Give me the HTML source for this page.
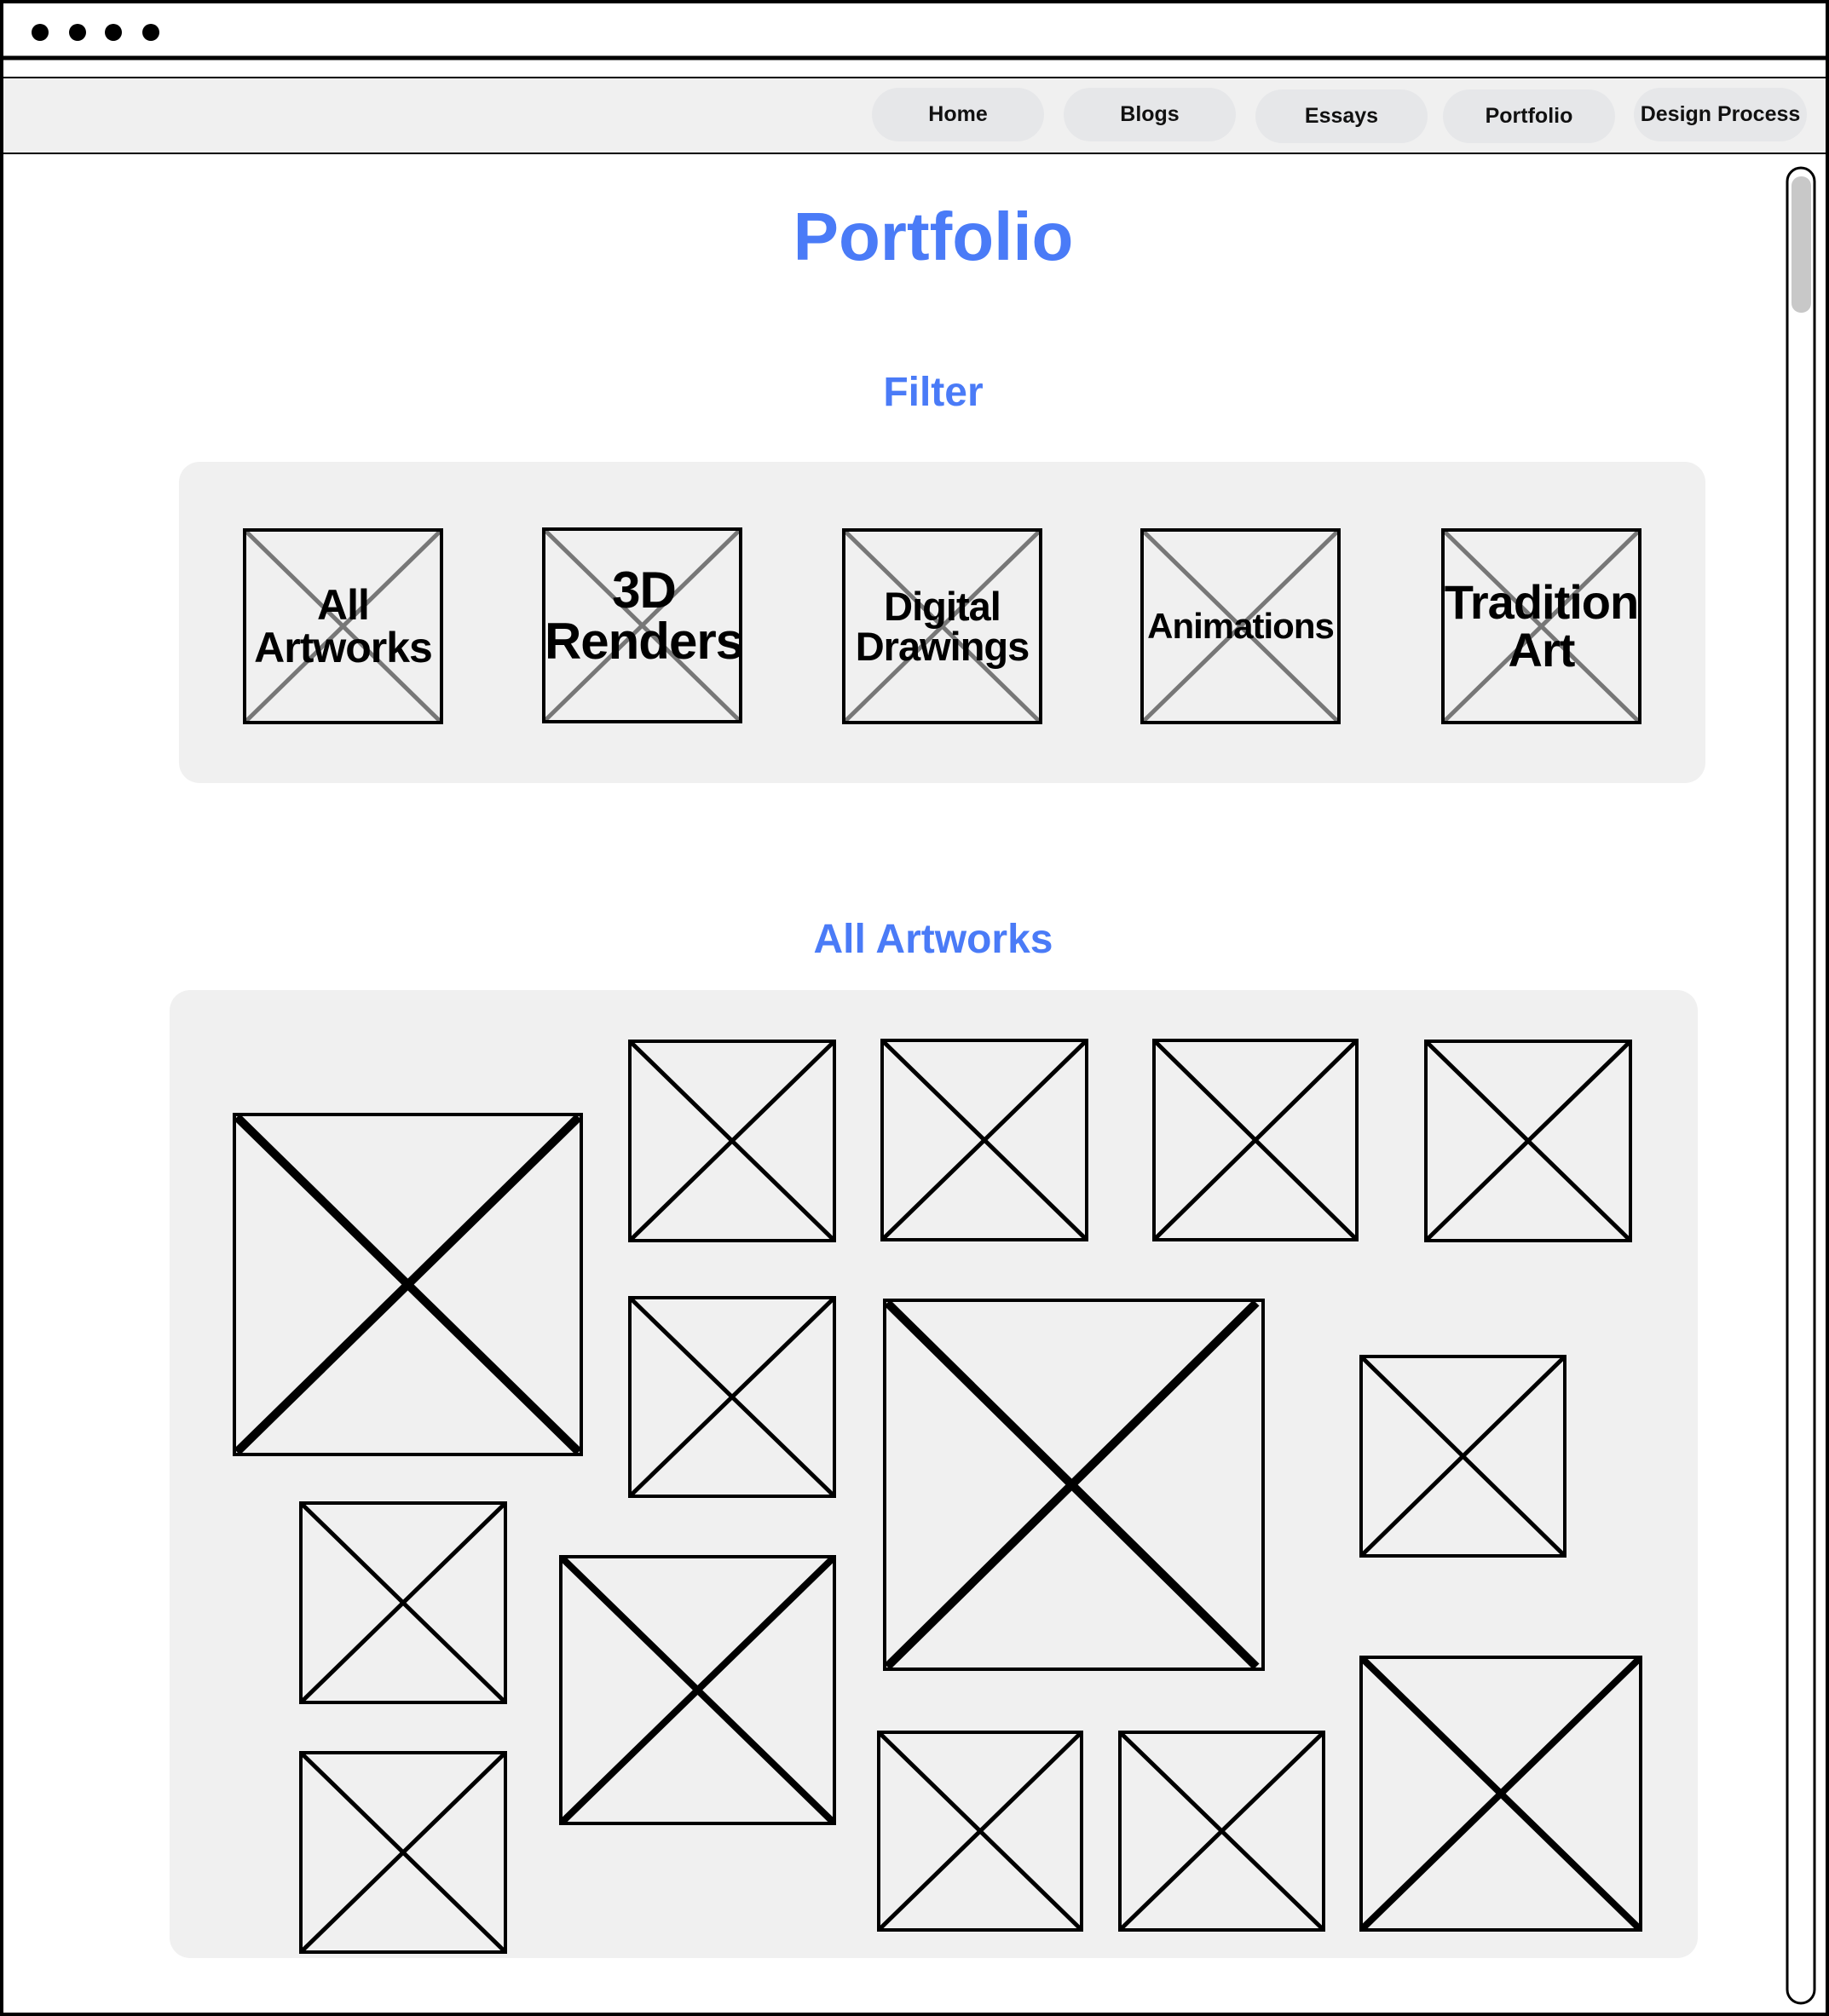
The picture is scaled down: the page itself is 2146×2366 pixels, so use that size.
<!DOCTYPE html>
<html><head><meta charset="utf-8"><style>
*{margin:0;padding:0;box-sizing:border-box}
body{width:2146px;height:2366px;background:#fff;position:relative;overflow:hidden;font-family:"Liberation Sans",sans-serif}
.abs{position:absolute}
.btn{position:absolute;top:103px;height:63px;width:202px;border-radius:32px;background:#e6e7e9;font-size:25px;font-weight:bold;color:#111;display:flex;align-items:center;justify-content:center}
.h{position:absolute;left:0;width:2190px;text-align:center;color:#4a7bf7;font-weight:bold}
.fl{position:absolute;width:231px;height:226px;display:flex;align-items:center;justify-content:center;text-align:center;font-weight:bold;color:#000;line-height:1;letter-spacing:-1px}
</style></head><body>
<svg class="abs" style="left:0;top:0" width="2146" height="2366">
<rect x="2" y="2" width="2142" height="2362" fill="none" stroke="#000" stroke-width="4"/>
<line x1="0" y1="68" x2="2146" y2="68" stroke="#000" stroke-width="5"/>
<rect x="4" y="91" width="2138" height="89" fill="#f0f0f0"/>
<line x1="0" y1="91" x2="2146" y2="91" stroke="#000" stroke-width="2"/>
<line x1="0" y1="180" x2="2146" y2="180" stroke="#000" stroke-width="2"/>
<circle cx="47" cy="38" r="10"/><circle cx="91" cy="38" r="10"/><circle cx="133" cy="38" r="10"/><circle cx="177" cy="38" r="10"/>
<rect x="2097" y="197" width="32" height="2154" rx="16" fill="#fff" stroke="#000" stroke-width="3"/>
<rect x="2102" y="207" width="23" height="160" rx="11" fill="#c8c8c8"/>
<rect x="210" y="542" width="1791" height="377" rx="24" fill="#f0f0f0"/>
<rect x="199" y="1162" width="1793" height="1136" rx="24" fill="#f0f0f0"/>
<g stroke="#777" stroke-width="5">
<line x1="287" y1="622" x2="518" y2="848"/><line x1="518" y1="622" x2="287" y2="848"/>
<line x1="638" y1="621" x2="869" y2="847"/><line x1="869" y1="621" x2="638" y2="847"/>
<line x1="990" y1="622" x2="1221" y2="848"/><line x1="1221" y1="622" x2="990" y2="848"/>
<line x1="1340" y1="622" x2="1571" y2="848"/><line x1="1571" y1="622" x2="1340" y2="848"/>
<line x1="1693" y1="622" x2="1924" y2="848"/><line x1="1924" y1="622" x2="1693" y2="848"/>
</g>
<g fill="none" stroke="#000" stroke-width="4">
<rect x="287" y="622" width="231" height="226"/><rect x="638" y="621" width="231" height="226"/>
<rect x="990" y="622" width="231" height="226"/><rect x="1340" y="622" width="231" height="226"/>
<rect x="1693" y="622" width="231" height="226"/>
</g>
<g fill="#f0f0f0" stroke="#000">
<g stroke-width="4">
<rect x="739" y="1222" width="240" height="234"/><rect x="1035" y="1221" width="240" height="234"/>
<rect x="1354" y="1221" width="238" height="234"/><rect x="1673" y="1222" width="240" height="234"/>
<rect x="739" y="1523" width="240" height="233"/><rect x="1597" y="1592" width="239" height="234"/>
<rect x="353" y="1764" width="240" height="234"/><rect x="353" y="2057" width="240" height="234"/>
<rect x="1031" y="2033" width="238" height="232"/><rect x="1314" y="2033" width="239" height="232"/>
<rect x="275" y="1308" width="407" height="399"/><rect x="1038" y="1526" width="444" height="433"/>
<rect x="658" y="1827" width="321" height="313"/><rect x="1597" y="1945" width="328" height="320"/>
</g>
</g>
<g stroke="#000" stroke-width="5">
<path d="M739 1222L979 1456M979 1222L739 1456M1035 1221L1275 1455M1275 1221L1035 1455M1354 1221L1592 1455M1592 1221L1354 1455M1673 1222L1913 1456M1913 1222L1673 1456M739 1523L979 1756M979 1523L739 1756M1597 1592L1836 1826M1836 1592L1597 1826M353 1764L593 1998M593 1764L353 1998M353 2057L593 2291M593 2057L353 2291M1031 2033L1269 2265M1269 2033L1031 2265M1314 2033L1553 2265M1553 2033L1314 2265"/>
</g>
<g stroke="#000" stroke-width="10">
<path d="M278 1311L679 1704M679 1311L278 1704M1041 1529L1474 1956M1474 1529L1041 1956"/>
</g>
<g stroke="#000" stroke-width="8">
<path d="M660 1829L977 2138M977 1829L660 2138M1599 1947L1923 2263M1923 1947L1599 2263"/>
</g>
</svg>
<div class="btn" style="left:1023px">Home</div>
<div class="btn" style="left:1248px">Blogs</div>
<div class="btn" style="left:1473px;top:105px">Essays</div>
<div class="btn" style="left:1693px;top:105px">Portfolio</div>
<div class="btn" style="left:1917px;width:203px">Design Process</div>
<div class="h" style="top:232px;font-size:80px">Portfolio</div>
<div class="h" style="top:433px;font-size:48px">Filter</div>
<div class="fl" style="left:287px;top:622px;font-size:50px">All<br>Artworks</div>
<div class="fl" style="left:638px;top:610px;font-size:60px;width:235px">3D<br>Renders</div>
<div class="fl" style="left:990px;top:622px;font-size:47px">Digital<br>Drawings</div>
<div class="fl" style="left:1340px;top:622px;font-size:42px">Animations</div>
<div class="fl" style="left:1693px;top:622px;font-size:56px">Tradition<br>Art</div>
<div class="h" style="top:1075px;font-size:48px">All Artworks</div>
</body></html>
